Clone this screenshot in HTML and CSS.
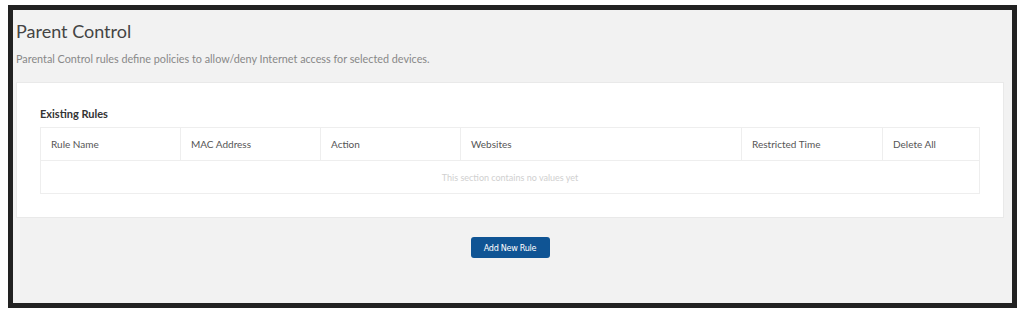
FILE: index.html
```html
<!DOCTYPE html>
<html lang="en">
<head>
  <meta charset="UTF-8">
  <title>Parent Control</title>
  <link rel="stylesheet" href="styles.css">
</head>
<body>
  <div class="frame">
    <h1 class="page-title">Parent Control</h1>
    <p class="page-desc">Parental Control rules define policies to allow/deny Internet access for selected devices.</p>

    <div class="card">
      <h2 class="card-title">Existing Rules</h2>
      <table class="rules">
        <thead>
          <tr>
            <th class="col-name">Rule Name</th>
            <th class="col-mac">MAC Address</th>
            <th class="col-action">Action</th>
            <th class="col-sites">Websites</th>
            <th class="col-time">Restricted Time</th>
            <th class="col-del">Delete All</th>
          </tr>
        </thead>
        <tbody>
          <tr>
            <td class="empty" colspan="6">This section contains no values yet</td>
          </tr>
        </tbody>
      </table>
    </div>

    <div class="actions">
      <button class="btn" type="button">Add New Rule</button>
    </div>
  </div>
</body>
</html>
```

FILE: styles.css
```css
* {
  margin: 0;
  padding: 0;
  box-sizing: border-box;
}

html, body {
  background: #fff;
}

body {
  font-family: Lato, "Open Sans", Arial, sans-serif;
  color: #444;
}

.frame {
  height: 303px;
  margin: 5px 7px 0 8px;
  padding: 0 8px 0 3px;
  border: 5px solid #222;
  background: #f2f2f2;
}

.page-title {
  font-size: 18px;
  font-weight: normal;
  line-height: 22px;
  color: #444;
  margin-top: 10px;
}

.page-desc {
  font-size: 10.8px;
  line-height: 14px;
  color: #888;
  margin-top: 10px;
}

.card {
  margin-top: 16px;
  background: #fff;
  border: 1px solid #e9e9e9;
  padding: 24px 23px 23px 23px;
}

.card-title {
  font-size: 11px;
  font-weight: bold;
  line-height: 14px;
  color: #333;
  margin-bottom: 6px;
}

.rules {
  width: 100%;
  border-collapse: collapse;
  border: 1px solid #eee;
  font-size: 10px;
}

.rules th {
  height: 33px;
  padding: 0 10px;
  text-align: left;
  font-weight: normal;
  color: #555;
  border-right: 1px solid #eee;
  border-bottom: 1px solid #eee;
}

.rules th:last-child {
  border-right: 0;
}

.col-name, .col-mac, .col-action { width: 140px; }
.col-time { width: 141px; }
.col-del { width: 97px; }

.rules td.empty {
  height: 33px;
  text-align: center;
  color: #d0d0d0;
  font-size: 9px;
}

.actions {
  display: flex;
  justify-content: center;
  margin-top: 19px;
}

.btn {
  width: 79px;
  height: 21px;
  border: 0;
  border-radius: 3px;
  background: #0f5494;
  color: #fff;
  font-family: "DejaVu Sans Condensed", "DejaVu Sans", sans-serif;
  font-size: 9px;
  letter-spacing: -0.3px;
}
```
